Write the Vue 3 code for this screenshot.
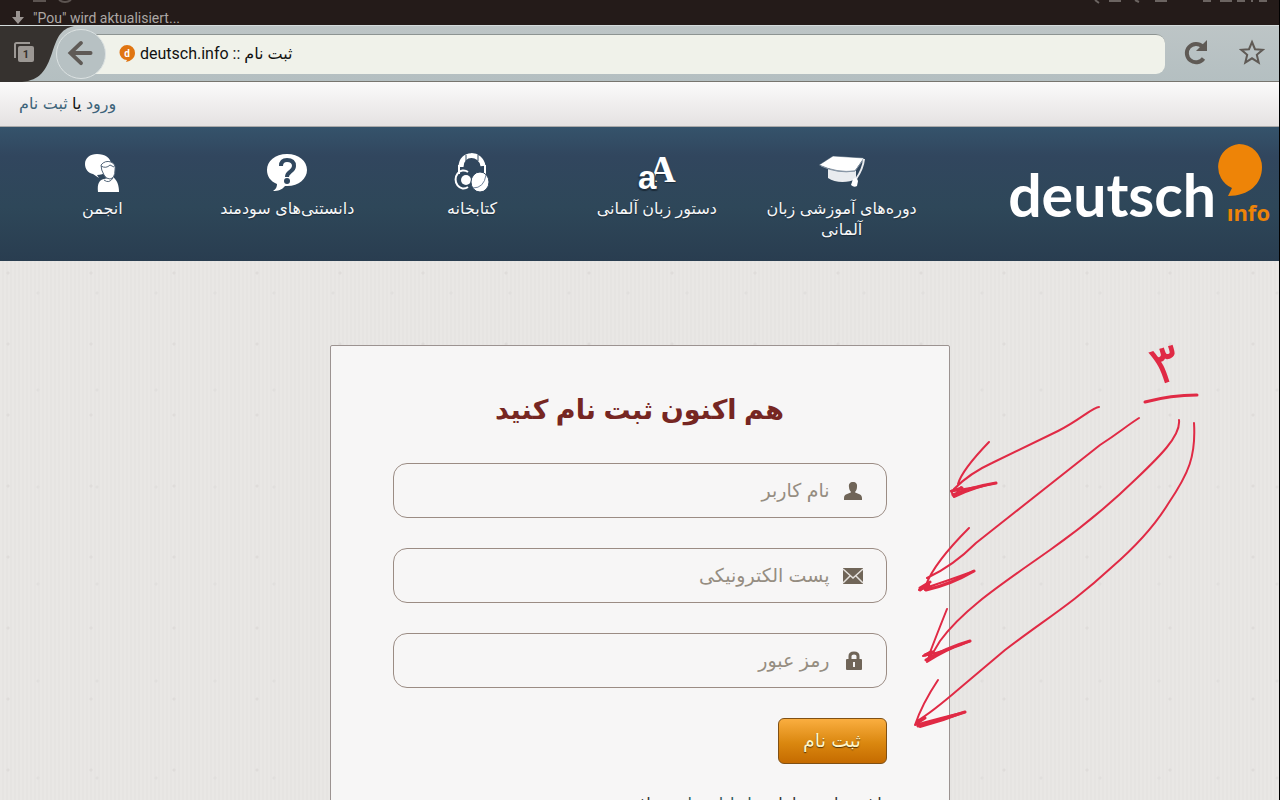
<template>
    <div class="screen">
        <div class="status-bar">
            <svg class="download-icon" viewBox="0 0 14 14" aria-hidden="true">
                <path d="M5 0h4v6h4l-6 7-6-7h4z" fill="#9a9491" />
            </svg>
            <span>"Pou" wird aktualisiert...</span>
            <svg class="status-marks left" viewBox="0 0 50 4" aria-hidden="true">
                <path d="M2 1h13M28 0q6 4 12 0" fill="none" stroke="#5c5451" stroke-width="2" />
            </svg>
            <svg class="status-marks right" viewBox="0 0 190 4" aria-hidden="true">
                <path d="M6 0l4 3M20 1h12M46 0l4 2M66 1h12M114 1h8M131 1h12M148 1h8M163 0v2M170 1h8" stroke="#6b6461" stroke-width="2" />
            </svg>
        </div>

        <header class="toolbar">
            <button type="button" class="tabs-btn" aria-label="Tabs">
                <svg class="tabs-shape" viewBox="0 0 80 56" aria-hidden="true">
                    <path d="M0 0H74C60 3 57 12 52 27C46 45 40 54 22 56H0z" fill="#36322f" />
                    <path d="M15 32V18.500Q15 17 16.500 17H30" fill="none" stroke="#9c9894" stroke-width="2" />
                    <rect x="18" y="20" width="16" height="16" rx="2" fill="#9c9894" />
                </svg>
                <span class="tab-count">1</span>
            </button>
            <button type="button" class="back-btn" aria-label="Back">
                <svg viewBox="0 0 50 50" aria-hidden="true">
                    <path d="M35 24H15M25 13.500L14 24L25 34.500" fill="none" stroke="#5f5a56" stroke-width="4" stroke-linecap="round" />
                </svg>
            </button>
            <div class="address">
                <svg class="favicon" viewBox="0 0 16 18" aria-hidden="true">
                    <path d="M8 0a8 8 0 0 1 8 8c0 5-4 8-9 9l1-2A7.500 7.500 0 0 1 8 0z" fill="#e07512" />
                    <text x="8" y="12" text-anchor="middle">d</text>
                </svg>
                <input type="text" class="address-input" aria-label="Address" v-model="address" />
            </div>
            <button type="button" class="tool-btn" aria-label="Reload">
                <svg viewBox="0 0 26 26" aria-hidden="true">
                    <path d="M19.500 7.500A9.200 9.200 0 1 0 20.500 19.500" fill="none" stroke="#5f5a55" stroke-width="4" />
                    <path d="M24 1V12H13z" fill="#5f5a55" />
                </svg>
            </button>
            <button type="button" class="tool-btn" aria-label="Bookmark">
                <svg viewBox="0 0 26 26" aria-hidden="true">
                    <path d="M13 3l3 7.200 7.700.6-5.900 5 1.900 7.700-6.700-4.200-6.700 4.200 1.900-7.700-5.900-5 7.700-.6z" fill="none" stroke="#5f5a55" stroke-width="2" />
                </svg>
            </button>
        </header>

        <div class="login-bar">
            <p dir="rtl"><a href="#login">ورود</a> یا <a href="#register">ثبت نام</a></p>
        </div>

        <nav class="site-nav" dir="rtl">
            <a href="#home" class="logo" dir="ltr" aria-label="deutsch.info">
                <span class="logo-name">deutsch</span>
                <span class="logo-side">
                    <svg viewBox="0 0 46 53" aria-hidden="true">
                        <path d="M23 0a23 23 0 0 1 23 23c0 17-13 29-34 29l4-8A23 23 0 0 1 23 0z" fill="#ee8407" />
                    </svg>
                    <span class="logo-info">ınfo</span>
                </span>
            </a>
            <ul class="menu">
                <li v-for="item in menu" :key="item.icon">
                    <a :href="'#' + item.icon">
                        <svg v-if="item.icon === 'courses'" viewBox="0 0 50 40" aria-hidden="true">
                            <path d="M11 17v9c7 5 20 5 28 1v-9z" fill="#e9ecef" />
                            <path d="M2 13L16 4l31 2-9 13Q20 21 2 13z" fill="#fff" stroke="#31485f" stroke-width="0.500" />
                            <path d="M4 14q17 8 34 5l8-11" fill="none" stroke="#8594a4" />
                            <path d="M47 7q-1 10-8 20" fill="none" stroke="#e9ecef" stroke-width="2" />
                            <path d="M36 27q4-3 5 2l-1 5q-3 2-6-1z" fill="#fff" />
                        </svg>
                        <svg v-else-if="item.icon === 'grammar'" viewBox="0 0 50 40" aria-hidden="true">
                            <text class="letter-big" x="17" y="30">A</text>
                            <text class="letter-small" x="6" y="37">a</text>
                        </svg>
                        <svg v-else-if="item.icon === 'library'" viewBox="0 0 50 40" aria-hidden="true">
                            <path d="M14 15C14 0 34 0 36 14" fill="none" stroke="#fff" stroke-width="5" />
                            <path d="M19 3v6M31 3v6" stroke="#31485f" />
                            <path d="M12 13v9M38 13v10" stroke="#fff" stroke-width="2" />
                            <path d="M21 20a8 9 0 1 0 0 15" fill="none" stroke="#fff" stroke-width="2" />
                            <circle cx="19" cy="28" r="5" fill="#fff" />
                            <ellipse cx="33" cy="30" rx="9" ry="10" fill="#fff" stroke="#31485f" />
                            <path d="M26 36q11 0 13-13" fill="none" stroke="#71839a" />
                        </svg>
                        <svg v-else-if="item.icon === 'useful'" viewBox="0 0 50 40" aria-hidden="true">
                            <path d="M25 2c12 0 20 7 20 16s-9 17-22 16c-3 4-7 5-12 5 3-2 4-4 4-7C8 29 5 24 5 18 5 9 13 2 25 2z" fill="#fff" />
                            <path d="M19 14q0-6 6-6 7 0 7 6 0 3-4 6-3 2-3 5" fill="none" stroke="#31485f" stroke-width="4" />
                            <circle cx="25" cy="29" r="3" fill="#31485f" />
                        </svg>
                        <svg v-else viewBox="0 0 50 40" aria-hidden="true">
                            <path d="M20 2c8 0 14 4 14 10s-7 11-14 11l2 3-6-4C11 21 8 17 8 12 8 6 13 2 20 2z" fill="#fff" />
                            <path d="M21 40c-1-8 1-12 6-13l9-2c4 3 6 8 6 15z" fill="#fff" />
                            <path d="M24 13q4-5 10-3 5 2 4 8 0 8-5 9-4 0-6-4-3-5-3-10z" fill="#fff" stroke="#526579" />
                            <path d="M24 14q5 3 9-1l4 2M27 28q5 4 9-2" fill="none" stroke="#526579" />
                        </svg>
                        <span>{{ item.label }}</span>
                    </a>
                </li>
            </ul>
        </nav>

        <main class="content">
            <form class="register" dir="rtl" @submit.prevent>
                <h1>هم اکنون ثبت نام کنید</h1>
                <div v-for="field in fields" :key="field.id" class="field">
                    <label :for="field.id" :aria-label="field.label">
                        <svg v-if="field.id === 'username'" viewBox="0 0 22 20" aria-hidden="true">
                            <path d="M11 1c3 0 4.500 2 4 5 0 2-1 4-2 5 1 2 7 1 7 6v2H2v-2c0-5 6-4 7-6-1-1-2-3-2-5-.5-3 1-5 4-5z" fill="#706558" />
                        </svg>
                        <svg v-else-if="field.id === 'email'" viewBox="0 0 22 20" aria-hidden="true">
                            <path d="M1 2h20v16H1z" fill="#706558" />
                            <path d="M1 3l10 9L21 3M1 17l7-7M21 17l-7-7" fill="none" stroke="#e4e0dc" stroke-width="1.500" />
                        </svg>
                        <svg v-else viewBox="0 0 22 20" aria-hidden="true">
                            <path d="M8 9V5q0-3 4-3t4 3v4" fill="none" stroke="#706558" stroke-width="3" />
                            <rect x="4" y="8" width="16" height="11" rx="1" fill="#706558" />
                            <path d="M12 11v5" stroke="#f4f2f1" stroke-width="2" />
                        </svg>
                    </label>
                    <input :id="field.id" v-model="form[field.id]" :type="field.type" :placeholder="field.label" />
                </div>
                <button type="submit" class="submit-btn">ثبت نام</button>
                <p class="terms">با ثبت نام شما با <a href="#terms">شرایط استفاده</a> موافقید</p>
            </form>
        </main>

        <svg class="notes" viewBox="0 0 380 410" aria-hidden="true">
            <text x="256" y="54" transform="rotate(-18 262 52)">۳</text>
            <g fill="none" stroke="#e02a45" stroke-width="2" stroke-linecap="round" stroke-linejoin="round">
                <path d="M245 72Q271 65 297 65" stroke-width="3" />
                <path d="M199 77C193 77 180 90 158 101L92 133Q70 143 54 159M89 112Q62 140 58 154M51 161Q75 158 96 153M54 167Q75 157 96 153M51 161l3 6 7-10" />
                <path d="M239 88C225 97 220 102 200 115L76 213Q53 236 27 248M69 198Q34 233 26 255M19 260Q50 250 74 241M25 260Q55 252 74 241M19 260l10-7" />
                <path d="M279 90C281 106 258 128 237 148Q197 187 150 220C105 252 64 278 40 311L28 331M47 279Q37 304 29 325M23 326Q51 320 70 311M27 332Q45 320 70 311M23 326l8-5-4 11" />
                <path d="M294 93C296 126 289 143 268 174Q249 205 212 237C172 274 144 290 105 320L60 358Q31 383 17 391M38 350Q22 374 15 395M15 395Q44 387 65 382M20 397Q43 391 65 382M15 395l8-6" />
                <path d="M53 165Q72 157 96 153M20 260Q34 250 26 260Q50 255 74 241M26 330Q46 318 70 311M18 396Q40 390 65 382" stroke-width="3" />
                <path d="M52 161l10-3M20 258l10-6M25 325l8-3M17 393l8-5" stroke-width="3" />
            </g>
        </svg>
    </div>
</template>

<script setup>
import { ref } from 'vue'

const address = ref('deutsch.info :: ثبت نام')

const menu = [
    { icon: 'courses', label: 'دوره‌های آموزشی زبان آلمانی' },
    { icon: 'grammar', label: 'دستور زبان آلمانی' },
    { icon: 'library', label: 'کتابخانه' },
    { icon: 'useful', label: 'دانستنی‌های سودمند' },
    { icon: 'forum', label: 'انجمن' }
]

const fields = [
    { id: 'username', type: 'text', label: 'نام کاربر' },
    { id: 'email', type: 'email', label: 'پست الکترونیکی' },
    { id: 'password', type: 'password', label: 'رمز عبور' }
]

const form = ref({
    username: '',
    email: '',
    password: ''
})
</script>

<style>
body {
    margin: 0;
    background: #e8e6e4;
}
</style>

<style scoped>
.screen {
    position: relative;
    box-sizing: border-box;
    display: flex;
    flex-direction: column;
    height: 100vh;
    overflow: hidden;
    border-right: 1px solid #000;
    font-family: "Liberation Sans", "DejaVu Sans", sans-serif;
    background: #e8e6e4;
}

button {
    padding: 0;
    border: 0;
    background: none;
}

a {
    text-decoration: none;
}

.status-bar {
    position: relative;
    display: flex;
    align-items: flex-end;
    flex: none;
    box-sizing: border-box;
    height: 25px;
    padding: 0 0 0 11px;
    background: #241b19;
    color: #aca7a4;
    font: 14px/14px Roboto, sans-serif;
}

.download-icon {
    width: 14px;
    height: 14px;
    margin-right: 8px;
}

.status-marks {
    position: absolute;
    top: 0;
    height: 4px;
}

.status-marks.left {
    left: 31px;
    width: 50px;
}

.status-marks.right {
    right: 0;
    width: 190px;
}

.toolbar {
    display: flex;
    align-items: center;
    flex: none;
    box-sizing: border-box;
    height: 57px;
    border-top: 1px solid #d4dcdc;
    border-bottom: 1px solid #77756f;
    background: linear-gradient(#bdc5c6, #b4bfc1);
}

.tabs-btn {
    position: relative;
    width: 56px;
    height: 55px;
}

.tabs-shape {
    position: absolute;
    top: 0;
    left: 0;
    width: 80px;
    height: 56px;
}

.tab-count {
    position: absolute;
    top: 21px;
    left: 18px;
    width: 16px;
    color: #36322f;
    font: bold 11px/15px Roboto, sans-serif;
}

.back-btn {
    z-index: 1;
    box-sizing: border-box;
    width: 50px;
    height: 50px;
    border: 1px solid #dce2e2;
    border-radius: 50%;
    background: #b7c1c3;
}

.back-btn svg {
    display: block;
}

.address {
    display: flex;
    align-items: center;
    flex: 1;
    box-sizing: border-box;
    height: 40px;
    margin: 0 10px 0 -25px;
    padding-left: 38px;
    border-top: 1px solid #8d9492;
    border-radius: 0 9px 9px 0;
    background: #f0f2ea;
}

.favicon {
    width: 16px;
    height: 18px;
    margin-right: 5px;
}

.favicon text {
    fill: #fff;
    font: bold 10px Roboto, sans-serif;
}

.address-input {
    flex: 1;
    min-width: 0;
    padding: 0;
    border: 0;
    outline: 0;
    background: none;
    color: #111;
    font: 16px/24px Roboto, "DejaVu Sans", sans-serif;
}

.tool-btn {
    width: 42px;
    height: 42px;
    margin-right: 14px;
}

.tool-btn:last-child {
    margin-right: 6px;
}

.tool-btn svg {
    width: 26px;
    height: 26px;
}

.login-bar {
    display: flex;
    align-items: center;
    flex: none;
    box-sizing: border-box;
    height: 45px;
    padding: 0 19px;
    border-bottom: 1px solid #aaa;
    background: linear-gradient(#fbfafa, #e5e2e2);
}

.login-bar p {
    margin: 0;
    color: #111;
    font-size: 16px;
    line-height: 24px;
}

.login-bar a {
    color: #3d6379;
}

.site-nav {
    display: flex;
    justify-content: space-between;
    flex: none;
    box-sizing: border-box;
    height: 134px;
    padding: 0 9px 0 10px;
    background: linear-gradient(#35536b, #31465e 22%, #2e4759 60%, #293d50);
}

.logo {
    display: flex;
    align-items: flex-end;
    justify-content: flex-end;
    width: 260px;
    height: 100px;
    color: #fff;
}

.logo-name {
    font: bold 59px/64px Lato, sans-serif;
}

.logo-side {
    display: flex;
    flex-direction: column;
    align-items: flex-end;
}

.logo-side svg {
    width: 46px;
    height: 53px;
    margin-right: 8px;
}

.logo-info {
    color: #ee8407;
    font: bold 22px/30px "Open Sans", sans-serif;
}

.menu {
    display: flex;
    flex: 1;
    margin: 0 76px 0 0;
    padding: 23px 0 0;
    list-style: none;
}

.menu li {
    display: flex;
    flex: 1;
    justify-content: center;
}

.menu a {
    display: flex;
    flex-direction: column;
    align-items: center;
    max-width: 170px;
    color: #f6f7f8;
    font-size: 16px;
    line-height: 21px;
    text-align: center;
    text-shadow: 0 1px 1px #1c2b38;
}

.menu svg {
    direction: ltr;
    width: 50px;
    height: 44px;
    margin-bottom: 4px;
}

.letter-big {
    fill: #fff;
    font: bold 37px "Liberation Serif", serif;
}

.letter-small {
    fill: #fff;
    stroke: #31485f;
    stroke-width: 2px;
    paint-order: stroke;
    font: bold 33px "Liberation Sans", sans-serif;
}

.content {
    display: flex;
    justify-content: center;
    flex: 1;
    padding-top: 84px;
    background:
        radial-gradient(circle at 8px 12px, #dfdcda 1px, transparent 2px) 0 0 / 83px 71px,
        radial-gradient(circle at 8px 12px, #e1dfdd 1px, transparent 2px) 30px 20px / 59px 97px,
        repeating-linear-gradient(90deg, #e9e7e5 0 2px, #e6e4e2 2px 4px);
}

.register {
    box-sizing: border-box;
    width: 620px;
    height: 600px;
    padding: 42px 62px;
    border: 1px solid #9c9391;
    border-radius: 2px;
    background: #f7f6f6;
}

.register h1 {
    margin: 0 0 31px;
    color: #762622;
    font-size: 27px;
    line-height: 44px;
    text-align: center;
}

.field {
    display: flex;
    align-items: center;
    box-sizing: border-box;
    height: 55px;
    margin-bottom: 30px;
    padding: 0 22px;
    border: 1px solid #9b8c84;
    border-radius: 14px;
}

.field label {
    display: flex;
    margin-left: 12px;
}

.field svg {
    width: 22px;
    height: 20px;
}

.field input {
    flex: 1;
    min-width: 0;
    padding: 0;
    border: 0;
    outline: 0;
    background: none;
    font: 19px/30px "Liberation Sans", "DejaVu Sans", sans-serif;
}

.field input::placeholder {
    color: #958d81;
    opacity: 1;
}

.submit-btn {
    display: block;
    min-width: 109px;
    height: 46px;
    padding: 0 24px;
    border: 1px solid #805014;
    border-radius: 6px;
    background: linear-gradient(#faae40, #da870f 55%, #c56b00);
    color: #fff6c8;
    font: 19px/30px "Liberation Sans", "DejaVu Sans", sans-serif;
    text-shadow: 0 1px 1px #50320a;
}

.terms {
    margin: 28px 0 0;
    color: #333;
    font-size: 16px;
    line-height: 24px;
}

.terms a {
    color: #2c5b5d;
}

/* freehand marks drawn over the page */
.notes {
    position: absolute;
    top: 330px;
    right: -1px;
    width: 380px;
    height: 410px;
    pointer-events: none;
}

.notes text {
    fill: #e02a45;
    font: 54px "DejaVu Sans", sans-serif;
}
</style>
